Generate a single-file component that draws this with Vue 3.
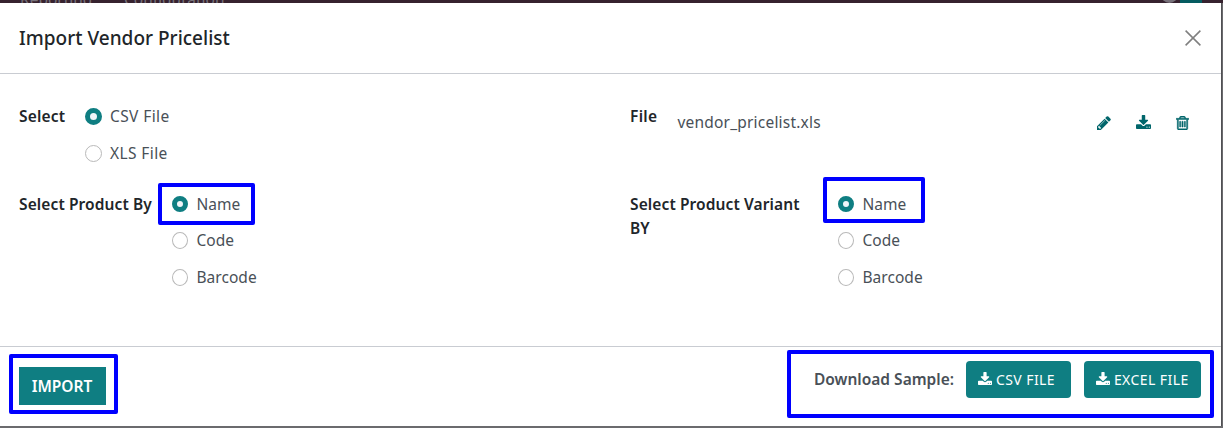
<script setup>
const icons = {
  pencil: {
    box: '0 128 1536 1536',
    d: 'M363 1536l91-91-235-235-91 91v107h128v128h107zm523-928q0-22-22-22-10 0-17 7l-542 542q-7 7-7 17 0 22 22 22 10 0 17-7l542-542q7-7 7-17zm-54-192l416 416-832 832h-416v-416zm683 96q0 53-37 90l-166 166-416-416 166-165q36-38 90-38 53 0 91 38l235 234q37 39 37 91z',
  },
  download: {
    box: '0 0 1664 1536',
    d: 'M1280 1344q0-26-19-45t-45-19-45 19-19 45 19 45 45 19 45-19 19-45zm256 0q0-26-19-45t-45-19-45 19-19 45 19 45 45 19 45-19 19-45zm128-224v320q0 40-28 68t-68 28h-1472q-40 0-68-28t-28-68v-320q0-40 28-68t68-28h465l135 136q58 56 136 56t136-56l136-136h464q40 0 68 28t28 68zm-325-569q17 41-14 70l-448 448q-18 19-45 19t-45-19l-448-448q-31-29-14-70 17-39 59-39h256v-448q0-26 19-45t45-19h256q26 0 45 19t19 45v448h256q42 0 59 39z',
  },
  trash: {
    box: '0 128 1408 1536',
    d: 'M512 736v576q0 14-9 23t-23 9h-64q-14 0-23-9t-9-23v-576q0-14 9-23t23-9h64q14 0 23 9t9 23zm256 0v576q0 14-9 23t-23 9h-64q-14 0-23-9t-9-23v-576q0-14 9-23t23-9h64q14 0 23 9t9 23zm256 0v576q0 14-9 23t-23 9h-64q-14 0-23-9t-9-23v-576q0-14 9-23t23-9h64q14 0 23 9t9 23zm128 724v-948h-896v948q0 22 7 40.5t14.5 27 10.5 8.5h832q3 0 10.5-8.5t14.5-27 7-40.5zm-672-1076h448l-48-117q-7-9-17-11h-317q-10 2-17 11zm928 32v64q0 14-9 23t-23 9h-96v948q0 83-47 143.5t-113 60.5h-832q-66 0-113-58.5t-47-141.5v-952h-96q-14 0-23-9t-9-23v-64q0-14 9-23t23-9h309l70-167q15-37 54-63t79-26h320q40 0 79 26t54 63l70 167h309q14 0 23 9t9 23z',
  },
}
const fileTypes = ['CSV File', 'XLS File']
const matchBy = ['Name', 'Code', 'Barcode']
</script>

<template>
  <div class="page">
    <div class="navbar">
      <span class="nav-a">Reporting</span><span class="nav-b">Configuration</span>
      <i class="avatar"></i><i class="tray"></i>
    </div>
    <div class="modal">
      <header>
        <h4>Import Vendor Pricelist</h4>
        <svg class="close" viewBox="0 0 16 16"><path d="M.6.6 15.4 15.4M15.4.6.6 15.4" /></svg>
      </header>
      <main>
        <section class="col left">
          <div class="field first">
            <label class="l-select">Select</label>
            <div class="radios">
              <div v-for="(t, i) in fileTypes" :key="t" class="radio file-type"><i :class="{ on: i === 0 }"></i><span>{{ t }}</span></div>
            </div>
          </div>
          <div class="field">
            <label class="l-product">Select Product By</label>
            <div class="radios">
              <div v-for="(t, i) in matchBy" :key="t" class="radio match"><i :class="{ on: i === 0 }"></i><span>{{ t }}</span></div>
            </div>
          </div>
        </section>
        <section class="col right">
          <div class="field first">
            <label class="l-file">File</label>
            <div class="file">
              <span class="filename">vendor_pricelist.xls</span>
              <svg class="pencil" :viewBox="icons.pencil.box"><path :d="icons.pencil.d" /></svg>
              <svg class="download" :viewBox="icons.download.box"><path :d="icons.download.d" /></svg>
              <svg class="trash" :viewBox="icons.trash.box"><path :d="icons.trash.d" /></svg>
            </div>
          </div>
          <div class="field">
            <label class="l-variant">Select Product Variant BY</label>
            <div class="radios">
              <div v-for="(t, i) in matchBy" :key="t" class="radio match"><i :class="{ on: i === 0 }"></i><span>{{ t }}</span></div>
            </div>
          </div>
        </section>
      </main>
      <footer>
        <button class="import"><span>IMPORT</span></button>
        <div class="samples">
          <strong>Download Sample:</strong>
          <button class="csv"><svg :viewBox="icons.download.box"><path :d="icons.download.d" /></svg><span>CSV FILE</span></button>
          <button class="excel"><svg :viewBox="icons.download.box"><path :d="icons.download.d" /></svg><span>EXCEL FILE</span></button>
        </div>
      </footer>
    </div>
    <div class="mark mark-product"></div>
    <div class="mark mark-variant"></div>
    <div class="mark mark-import"></div>
    <div class="mark mark-samples"></div>
  </div>
</template>

<style>
body { margin: 0; overflow: hidden; }
</style>

<style scoped>
* { box-sizing: border-box; }
.page { position: relative; width: 1223px; height: 428px; overflow: hidden; background: #6b6b6e; font: 16px/24px "Noto Sans", sans-serif; color: #495057; }
.navbar { height: 3px; overflow: hidden; background: #36222f; display: flex; color: #77717a; line-height: 20px; font-size: 15.5px; }
.navbar span { margin-top: -11px; height: 20px; white-space: nowrap; }
.nav-a { margin-left: 20px; width: 104px; }
.nav-b { width: 110px; }
.avatar { margin-left: 927px; width: 17px; height: 17px; margin-top: -14px; border-radius: 50%; background: #77717a; }
.tray { width: 22px; height: 3px; margin-left: 2px; background: #055b60; }
.modal { width: 1222px; height: 423px; background: #fff; border-right: 1px solid #505054; display: flex; flex-direction: column; white-space: nowrap; }
header { height: 71px; border-bottom: 1px solid #c9ccd2; display: flex; justify-content: space-between; padding: 23px 20px 0 19px; }
h4 { margin: 0; font-size: 19px; line-height: 24px; font-weight: 500; color: #212529; letter-spacing: .01px; }
.close { width: 16px; height: 16px; margin-top: 4px; fill: none; stroke: #7f7f7f; stroke-width: 1.5; }
main { height: 272px; display: flex; padding: 30px 0 0 19px; }
.col { width: 611px; flex: none; }
.right { width: 591px; }
.field { display: flex; align-items: flex-start; }
.field.first { height: 88px; }
label { font-size: 15.5px; font-weight: 600; color: #212529; flex: none; letter-spacing: .11px; }
.l-select { width: 66px; letter-spacing: .2px; }
.l-product { width: 153px; }
.l-file { width: 47.5px; letter-spacing: .3px; }
.l-variant { width: 208px; padding-right: 30px; white-space: normal; }
.radio { display: flex; align-items: flex-start; font-size: 15.5px; }
.file-type { letter-spacing: .4px; height: 37px; }
.match { height: 36px; letter-spacing: .03px; }
.match:last-child { padding-top: 1px; }
.radio i { width: 17px; height: 17px; margin: 4px 8px 0 0; border: 1px solid #b9b9b9; border-radius: 50%; flex: none; }
.match i { width: 16px; height: 17px; margin-right: 8.5px; }
.radio i.on { border: 5px solid #0f7e82; background: #f1f5f9; }
.match i.on { height: 16px; }
.file { display: flex; padding-top: 6px; flex: 1; }
.filename { width: 419.5px; font-size: 15.5px; letter-spacing: .2px; }
svg { fill: #01666b; flex: none; }
.pencil { width: 14px; height: 14px; margin-top: 6px; }
.download { width: 15px; height: 14px; margin: 5px 0 0 25px; }
.trash { width: 13px; height: 14px; margin: 6px 0 0 25px; stroke: #01666b; stroke-width: 50; }
footer { flex: 1; border-top: 1px solid #c9ccd2; display: flex; justify-content: space-between; padding: 14px 20px 0 19px; }
button { border: 0; margin: 0; padding: 0; background: #0f7e82; color: #fff; font-family: inherit; display: flex; align-items: center; justify-content: center; }
.import { width: 87px; height: 38px; margin-top: 6px; font-size: 15.5px; font-weight: 600; letter-spacing: 0; padding-right: 1px; }
.samples { display: flex; }
strong { font-size: 15.5px; font-weight: 600; width: 152px; padding-top: 6px; letter-spacing: 0; }
.samples button { height: 37px; border-radius: 4px; font-size: 14px; gap: 3.5px; justify-content: flex-start; padding-left: 12.4px; letter-spacing: .43px; }
.samples svg { width: 14px; height: 13px; margin-top: -3px; fill: #fff; }
.csv { width: 105px; margin-right: 13px; }
.excel { width: 117px; }
.mark { position: absolute; border: 4px solid #00f; border-radius: 2px; }
.mark-product { left: 158px; top: 183px; width: 97px; height: 42px; }
.mark-variant { left: 823px; top: 177px; width: 102px; height: 46px; }
.mark-import { left: 9px; top: 354px; width: 109px; height: 60px; }
.mark-samples { left: 787px; top: 350px; width: 427px; height: 68px; }
</style>
